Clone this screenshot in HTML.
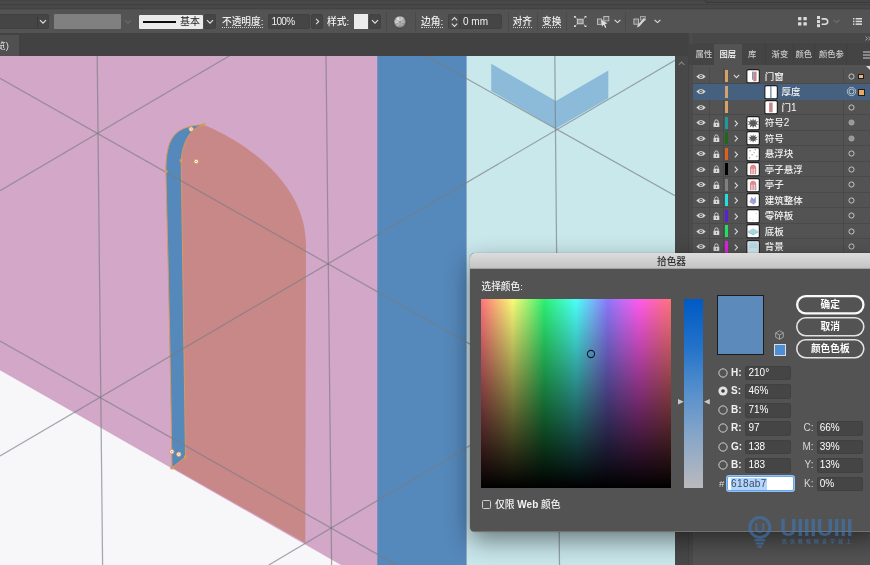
<!DOCTYPE html>
<html lang="zh"><head><meta charset="utf-8"><title>拾色器</title>
<style>
*{box-sizing:border-box;margin:0;padding:0}
html,body{width:870px;height:565px;overflow:hidden;background:#535353}
body{position:relative;font-family:"Liberation Sans","Noto Sans CJK SC",sans-serif;font-size:10px;color:#e6e6e6;-webkit-font-smoothing:antialiased}
.abs{position:absolute}
#appbar{left:0;top:0;width:870px;height:9.5px;background:linear-gradient(#3e3e3e 0,#484848 1px,#484848 3.6px,#3c3c3c 4.2px,#474747 5.2px,#474747 8.2px,#3d3d3d 8.9px,#4d4d4d 9.5px)}
#toolbar{left:0;top:9.5px;width:870px;height:24px;background:#535353}
#tabbar{left:0;top:33px;width:870px;height:23px;background:#424242}
.fld{position:absolute;background:#454545;border:1px solid #414141;border-radius:2px;height:15px;top:14px;color:#f0f0f0;font-size:10px;line-height:13px;padding-left:3px;white-space:nowrap}
.lbl{position:absolute;top:14px;height:15px;line-height:15px;font-size:9.7px;font-weight:500;color:#f0f0f0;white-space:nowrap}
.sep{position:absolute;top:12px;width:1px;height:19px;background:#4a4a4a}
svg{position:absolute;overflow:visible}
</style></head><body><div id="root" style="position:absolute;left:0;top:0;width:870px;height:565px;will-change:transform">
<div class="abs" id="appbar"></div>
<div class="abs" id="toolbar"></div>
<div class="abs" id="tabbar"></div>
<!--TOOLBAR-->
<div class="abs" id="tb" style="left:0;top:0;width:870px;height:56px">
  <!-- app bar search -->
  <div class="abs" style="left:705px;top:-12px;width:170px;height:15px;background:#454545;border:1px solid #3a3a3a;border-radius:2px;font-size:9px;color:#aaa;line-height:12px;padding-left:12px;overflow:hidden">搜索 Adobe Stock</div>
  <!-- doc tab -->
  <div class="abs" style="left:0;top:34.5px;width:19px;height:21.5px;background:#505050;font-size:9.5px;line-height:22px;color:#ddd;overflow:hidden;white-space:nowrap"><span style="position:absolute;right:10px">预览)</span></div>
  <!-- dropdown 1 -->
  <div class="fld" style="left:-10px;width:59px"></div>
  <div class="abs" style="left:37px;top:15px;width:1px;height:13px;background:#3a3a3a"></div>
  <svg style="left:39px;top:19px" width="8" height="6" viewBox="0 0 8 6"><path d="M1,1.2 L4,4.2 L7,1.2" fill="none" stroke="#e0e0e0" stroke-width="1.2"/></svg>
  <!-- gray box -->
  <div class="abs" style="left:54px;top:14px;width:67px;height:15px;background:#808080;border-radius:1px"></div>
  <svg style="left:124px;top:19px" width="8" height="6" viewBox="0 0 8 6"><path d="M1,1.2 L4,4.2 L7,1.2" fill="none" stroke="#6a6a6a" stroke-width="1.2"/></svg>
  <!-- stroke style -->
  <div class="abs" style="left:139px;top:15px;width:64px;height:14px;background:#ebebeb;border-radius:1px"></div>
  <div class="abs" style="left:143px;top:20.6px;width:33px;height:2.6px;background:#0c0c0c"></div>
  <div class="abs" style="left:180px;top:15px;height:14px;line-height:14px;font-size:10px;color:#222;white-space:nowrap">基本</div>
  <div class="fld" style="left:204px;width:12px;padding:0"></div>
  <svg style="left:206px;top:19px" width="8" height="6" viewBox="0 0 8 6"><path d="M1,1.2 L4,4.2 L7,1.2" fill="none" stroke="#e0e0e0" stroke-width="1.2"/></svg>
  <!-- opacity -->
  <div class="lbl" id="l-op" style="left:222px;border-bottom:1px dotted #cfcfcf;height:14px;line-height:15px">不透明度<span style="font-weight:400">:</span></div>
  <div class="fld" id="f-op" style="left:268px;width:42px;letter-spacing:-.7px;padding-left:2.6px">100%</div>
  <div class="fld" style="left:311px;width:12px;padding:0"></div>
  <svg style="left:314.5px;top:18px" width="5" height="7" viewBox="0 0 5 7"><path d="M1.1,.8 L3.7,3.5 L1.1,6.2" fill="none" stroke="#dcdcdc" stroke-width="1.1"/></svg>
  <!-- style -->
  <div class="lbl" id="l-st" style="left:327px">样式<span style="font-weight:400">:</span></div>
  <div class="abs" style="left:353.6px;top:14px;width:14.8px;height:15px;background:#ececec"></div>
  <div class="fld" style="left:369px;width:12px;padding:0"></div>
  <svg style="left:371px;top:19px" width="8" height="6" viewBox="0 0 8 6"><path d="M1,1.2 L4,4.2 L7,1.2" fill="none" stroke="#e0e0e0" stroke-width="1.2"/></svg>
  <!-- recolor sphere -->
  <svg style="left:393px;top:15px" width="14" height="14" viewBox="0 0 14 14">
    <defs><radialGradient id="sph" cx=".4" cy=".35" r=".7"><stop offset="0" stop-color="#f2f2f2"/><stop offset=".6" stop-color="#b0b0b0"/><stop offset="1" stop-color="#6a6a6a"/></radialGradient></defs>
    <circle cx="7" cy="7" r="6.2" fill="url(#sph)" stroke="#3e3e3e" stroke-width=".8"/>
    <path d="M7,7 L7,1 M7,7 L12,4.2 M7,7 L12,10 M7,7 L7,13 M7,7 L2,10 M7,7 L2,4.2" stroke="#7a7a7a" stroke-width=".6"/>
  </svg>
  <div class="sep" style="left:386px"></div><div class="sep" style="left:415px"></div>
  <!-- corner -->
  <div class="lbl" id="l-co" style="left:421px;border-bottom:1px dotted #cfcfcf;height:14px;line-height:15px">边角<span style="font-weight:400">:</span></div>
  <div class="fld" id="f-co" style="left:448px;width:54px;padding-left:14px">0 mm</div>
  <div class="abs" style="left:449px;top:15px;width:11px;height:13px;background:#494949;border-right:1px solid #404040"></div><svg style="left:450px;top:16px" width="9" height="12" viewBox="0 0 9 12"><path d="M1.8,4.3 L4.5,1.6 L7.2,4.3 M1.8,7.7 L4.5,10.4 L7.2,7.7" fill="none" stroke="#dcdcdc" stroke-width="1.1"/></svg>
  <div class="sep" style="left:508px"></div>
  <div class="lbl" id="l-al" style="left:512.5px;border-bottom:1px dotted #cfcfcf;height:14px;line-height:15px">对齐</div>
  <div class="sep" style="left:537px"></div>
  <div class="lbl" id="l-tr" style="left:542px;border-bottom:1px dotted #cfcfcf;height:14px;line-height:15px">变换</div>
  <div class="sep" style="left:566px"></div>
  <!-- isolate icon -->
  <svg style="left:574px;top:16px" width="12.4" height="11" viewBox="0 0 12.4 11"><rect x="3.3" y="3.2" width="5.8" height="4.6" fill="#8e8e8e" stroke="#d4d4d4" stroke-width=".9"/><path d="M.8,.8 L2.5,2.3 M11.6,.8 L9.9,2.3 M.8,10.2 L2.5,8.7 M11.6,10.2 L9.9,8.7" stroke="#dcdcdc" stroke-width=".9"/><g fill="#ececec"><path d="M0,0 H2.3 L0,2.1 Z"/><path d="M12.4,0 H10.1 L12.4,2.1 Z"/><path d="M0,11 H2.3 L0,8.9 Z"/><path d="M12.4,11 H10.1 L12.4,8.9 Z"/></g></svg>
  <!-- select similar icons -->
  <svg style="left:597px;top:15.5px" width="13" height="13" viewBox="0 0 13 13"><rect x=".5" y="3" width="4.2" height="5.4" fill="#6e6e6e" stroke="#c4c4c4" stroke-width=".9"/><rect x="6.8" y=".5" width="5" height="4.4" fill="#676767" stroke="#c4c4c4" stroke-width=".9"/><path d="M4.4,3.8 L10.6,7.6 L7.9,8.1 L9.4,11.4 L8.2,12 L6.8,8.8 L4.9,10.6 Z" fill="#dedede"/></svg>
  <svg style="left:613.5px;top:19px" width="7" height="5" viewBox="0 0 7 5"><path d="M.6,.8 L3.5,3.6 L6.4,.8" fill="none" stroke="#e0e0e0" stroke-width="1.1"/></svg>
  <div class="sep" style="left:625px"></div>
  <svg style="left:633px;top:15.5px" width="13" height="13" viewBox="0 0 13 13"><rect x=".9" y="3" width="4.6" height="5.2" fill="#6e6e6e" stroke="#c4c4c4" stroke-width=".9"/><rect x="7.6" y=".5" width="4.6" height="3.6" fill="#676767" stroke="#b5b5b5" stroke-width=".8"/><path d="M11,2 L12.5,3.4 L6.6,10.2 L3.8,11.6 L4.9,8.7 Z" fill="#d6d6d6"/></svg>
  <svg style="left:653.5px;top:19px" width="7" height="5" viewBox="0 0 7 5"><path d="M.6,.8 L3.5,3.6 L6.4,.8" fill="none" stroke="#e0e0e0" stroke-width="1.1"/></svg>
  <!-- right icons -->
  <svg style="left:798.4px;top:17px" width="9" height="8.6" viewBox="0 0 9 8.6"><g fill="#dcdcdc"><rect x="0" y="0" width="3.4" height="3.2" rx=".5"/><rect x="5.4" y="0" width="3.4" height="3.2" rx=".5"/><rect x="0" y="5.2" width="3.4" height="3.2" rx=".5"/><rect x="5.4" y="5.2" width="3.4" height="3.2" rx=".5"/></g></svg>
  <svg style="left:817px;top:16px" width="12" height="11.4" viewBox="0 0 12 11.4"><g fill="#dcdcdc"><rect x="0" y="0" width="3" height="3"/><rect x="0" y="4.1" width="3" height="3"/><rect x="0" y="8.2" width="3" height="3"/></g><path d="M4.6,2.9 H8 A2.7,2.7 0 0 1 8,8.3 H4.6" fill="none" stroke="#dcdcdc" stroke-width="1.6"/></svg>
  <svg style="left:833px;top:19px" width="7" height="5" viewBox="0 0 7 5"><path d="M.6,.8 L3.5,3.6 L6.4,.8" fill="none" stroke="#707070" stroke-width="1.1"/></svg>
  <svg style="left:853.4px;top:18.4px" width="9" height="7" viewBox="0 0 9 7"><g fill="#dcdcdc"><rect x="0" y="0" width="1.4" height="1.5"/><rect x="0" y="2.7" width="1.4" height="1.5"/><rect x="0" y="5.4" width="1.4" height="1.5"/><rect x="2.6" y="0" width="6.4" height="1.5"/><rect x="2.6" y="2.7" width="6.4" height="1.5"/><rect x="2.6" y="5.4" width="6.4" height="1.5"/></g></svg>
</div>
<!--/TOOLBAR-->
<!--CANVAS-->
<div class="abs" id="canvas" style="left:0;top:56px;width:675px;height:509px;overflow:hidden;background:#d3a7c8">
<svg width="675" height="509" viewBox="0 56 675 509" style="left:0;top:0">
  <defs>
    <linearGradient id="dsh" x1="0" x2="1"><stop offset="0" stop-color="#000" stop-opacity="0"/><stop offset="1" stop-color="#000" stop-opacity=".13"/></linearGradient>
    <linearGradient id="dsv" x1="0" y1="0" x2="0" y2="1"><stop offset="0" stop-color="#000" stop-opacity=".22"/><stop offset="1" stop-color="#000" stop-opacity="0"/></linearGradient>
  </defs>
  <!-- wall -->
  <rect x="0" y="56" width="377.3" height="509" fill="#d3a7c8"/>
  <!-- floor -->
  <polygon points="0,370.2 341,565 0,565" fill="#f7f7f9"/>
  <!-- blue strip -->
  <rect x="377.3" y="56" width="89.4" height="509" fill="#5588bb"/>
  <!-- cyan -->
  <rect x="466.7" y="56" width="210" height="509" fill="#c9e8ec"/>
  <!-- chevron -->
  <polygon points="491.2,63.8 555.9,101 608.3,70.4 608.3,98.3 555.9,128.6 491.2,90.9" fill="#8bbbd9"/>
  <!-- door -->
  <path d="M172,467.6 C170,330 167,220 165.9,171.4 C166,138 174,126 203.9,124.7 C258,148 306,190 306,245 L305.3,543 Z" fill="#c98888"/>
  <!-- thickness -->
  <path id="thick" d="M172,467.6 C170,330 167,220 165.9,171.4 C166,138 174,126 203.9,124.7 C192,127 182.5,140 181.2,160.7 L185.5,457 Z" fill="#5588bb" stroke="#d69a5e" stroke-width="1"/>
  <!-- grid -->
  <g stroke="#787c82" stroke-opacity=".66" stroke-width="1.25" fill="none">
    <line x1="97.2" y1="56" x2="102.6" y2="565"/>
    <line x1="326" y1="56" x2="331.6" y2="565"/>
    <line x1="554.8" y1="56" x2="559.5" y2="565"/>
    <!-- descending -->
    <line x1="0" y1="78.4" x2="675" y2="460"/>
    <line x1="0" y1="341" x2="400" y2="567"/>
    <line x1="425.8" y1="55.6" x2="675" y2="195.8"/>
    <!-- ascending -->
    <line x1="0" y1="190.8" x2="230" y2="55.5"/>
    <line x1="0" y1="456" x2="675" y2="60.4"/>
    <line x1="268.8" y1="565" x2="675" y2="324"/>
  </g>
  <!-- anchors -->
  <g fill="#d69a5e">
    <rect x="202.4" y="123.2" width="3" height="3"/>
    <rect x="179.7" y="159.2" width="3" height="3"/>
    <rect x="164.4" y="169.9" width="3" height="3"/>
    <rect x="170.3" y="466.3" width="3" height="3"/>
    <rect x="184" y="455.5" width="3" height="3"/>
  </g>
  <g fill="#fff" stroke="#d69a5e" stroke-width="1">
    <circle cx="191.1" cy="129.1" r="2.2"/><circle cx="196.2" cy="161.5" r="2.2"/>
    <circle cx="171.8" cy="451.7" r="2.2"/><circle cx="178.8" cy="454.3" r="2.2"/>
  </g>
  <g fill="#d69a5e"><circle cx="191.1" cy="129.1" r=".8"/><circle cx="196.2" cy="161.5" r=".8"/><circle cx="171.8" cy="451.7" r=".8"/><circle cx="178.8" cy="454.3" r=".8"/></g>
  <!-- dialog shadow -->
</svg>
</div>
<div class="abs" style="left:675px;top:55.5px;width:13px;height:510px;background:#484848"></div>
<svg class="abs" style="left:678px;top:60.5px" width="7" height="5" viewBox="0 0 7 5"><path d="M.7,3.9 L3.5,1.1 L6.3,3.9" fill="none" stroke="#858585" stroke-width="1.1"/></svg>
<!--/CANVAS-->
<!--PANEL-->
<div class="abs" id="panel" style="left:688px;top:33px;width:182px;height:532px;background:#454545">
<div class="abs" style="left:0;top:0;width:182px;height:10px;background:#484848"></div>
<div class="abs" style="left:0;top:0;width:5px;height:532px;background:#4b4b4b"></div><div class="abs" style="left:0;top:0;width:1px;height:532px;background:#434343"></div>
<svg style="left:176.5px;top:3px" width="6" height="5" viewBox="0 0 6 5"><path d="M.6,.6 L2.4,2.5 L.6,4.4 M3.4,.6 L5.2,2.5 L3.4,4.4" fill="none" stroke="#b0b0b0" stroke-width=".9"/></svg>
<div class="abs" style="left:1px;top:10.5px;width:181px;height:21px;background:#444"></div>
<div class="abs" style="left:26px;top:10.5px;width:28px;height:22px;background:#535353"></div>
<div class="abs" style="left:76.5px;top:10px;width:1px;height:22px;background:#3e3e3e"></div>
<div class="abs" style="left:105px;top:10px;width:1px;height:22px;background:#3e3e3e"></div>
<div class="abs" style="left:125.5px;top:10px;width:1px;height:22px;background:#3e3e3e"></div>
<div class="abs" style="left:158px;top:10px;width:1px;height:22px;background:#3e3e3e"></div>
<div class="abs tab" style="left:7.6px;top:10px;height:22px;line-height:22px;font-size:8.3px;font-weight:500;color:#c8c8c8;white-space:nowrap">属性</div>
<div class="abs tab" style="left:31.5px;top:10px;height:22px;line-height:22px;font-size:8.3px;font-weight:500;color:#ffffff;white-space:nowrap">图层</div>
<div class="abs tab" style="left:60px;top:10px;height:22px;line-height:22px;font-size:8.3px;font-weight:500;color:#c8c8c8;white-space:nowrap">库</div>
<div class="abs tab" style="left:83.6px;top:10px;height:22px;line-height:22px;font-size:8.3px;font-weight:500;color:#c8c8c8;white-space:nowrap">渐变</div>
<div class="abs tab" style="left:107.5px;top:10px;height:22px;line-height:22px;font-size:8.3px;font-weight:500;color:#c8c8c8;white-space:nowrap">颜色</div>
<div class="abs tab" style="left:131px;top:10px;height:22px;line-height:22px;font-size:8.3px;font-weight:500;color:#c8c8c8;white-space:nowrap">颜色参</div>
<svg style="left:175px;top:17.5px" width="9" height="8" viewBox="0 0 9 8"><path d="M0,1 H9 M0,4 H9 M0,7 H9" stroke="#cfcfcf" stroke-width="1"/></svg>
<div class="abs" style="left:5px;top:32px;width:177px;height:500px;background:#535353"></div>
<div class="abs" style="left:21px;top:35px;width:1px;height:190px;background:#4a4a4a"></div>
<div class="abs" style="left:35px;top:35px;width:1px;height:190px;background:#4a4a4a"></div>
<div class="abs" style="left:154.6px;top:35px;width:1px;height:190px;background:#4a4a4a"></div>
<div class="abs row" style="left:5px;top:35.70px;width:177px;height:15.5px;background:transparent;border-bottom:1px solid #4a4a4a">
<svg style="left:2.6px;top:4px" width="10" height="7" viewBox="0 0 10 7"><path d="M.3,3.5 Q5,-1.6 9.7,3.5 Q5,8.6 .3,3.5 Z" fill="#d8d8d8"/><circle cx="5" cy="3.5" r="1.7" fill="#535353"/><circle cx="5" cy="3.5" r=".8" fill="#d8d8d8"/></svg>
<div class="abs" style="left:32.3px;top:1.4px;width:2.6px;height:12.4px;background:#d6a26c"></div>
<svg style="left:40px;top:5px" width="7" height="5" viewBox="0 0 7 5"><path d="M.8,.8 L3.5,3.6 L6.2,.8" fill="none" stroke="#d8d8d8" stroke-width="1.1"/></svg>
<svg style="left:53.3px;top:.5px" width="14.2" height="14.4" viewBox="-.3 -.1 13.6 14.2" preserveAspectRatio="none"><rect x=".5" y=".5" width="12" height="13" rx="1.6" fill="#fff" stroke="#1e1e1e" stroke-width="1.1"/><rect x="5.6" y="2.5" width="1" height="8" fill="#5588bb"/><rect x="6.6" y="2.5" width="3.2" height="9.5" fill="#c98888"/></svg>
<div class="abs nm" style="left:71.7px;top:0;height:15px;line-height:15px;font-size:9.5px;font-weight:500;color:#f4f4f4;white-space:nowrap">门窗</div>
<svg style="left:154.5px;top:4.2px" width="7" height="7" viewBox="0 0 7 7"><circle cx="3.5" cy="3.5" r="2.6" fill="none" stroke="#c6c6c6" stroke-width="1"/></svg>
<div class="abs" style="left:165.3px;top:5px;width:5.8px;height:5.6px;background:#eeb27a;border:1px solid #1e1e1e"></div>
</div>
<div class="abs row" style="left:5px;top:51.20px;width:177px;height:15.5px;background:#46607f;border-bottom:1px solid #46607f">
<svg style="left:2.6px;top:4px" width="10" height="7" viewBox="0 0 10 7"><path d="M.3,3.5 Q5,-1.6 9.7,3.5 Q5,8.6 .3,3.5 Z" fill="#d8d8d8"/><circle cx="5" cy="3.5" r="1.7" fill="#535353"/><circle cx="5" cy="3.5" r=".8" fill="#d8d8d8"/></svg>
<div class="abs" style="left:32.3px;top:1.4px;width:2.6px;height:12.4px;background:#d6a26c"></div>
<svg style="left:71.2px;top:.5px" width="14.2" height="14.4" viewBox="-.3 -.1 13.6 14.2" preserveAspectRatio="none"><rect x=".5" y=".5" width="12" height="13" rx="1.6" fill="#fff" stroke="#1e1e1e" stroke-width="1.1"/><rect x="5.8" y="1" width="1" height="12" fill="#4a6a8c"/></svg>
<div class="abs nm" style="left:88.5px;top:0;height:15px;line-height:15px;font-size:9.5px;font-weight:500;color:#f4f4f4;white-space:nowrap">厚度</div>
<svg style="left:152.5px;top:2.2px" width="11" height="11" viewBox="0 0 11 11"><circle cx="5.5" cy="5.5" r="4.2" fill="none" stroke="#b4c2d2" stroke-width=".9"/><circle cx="5.5" cy="5.5" r="2.5" fill="none" stroke="#d0d8e0" stroke-width=".9"/></svg>
<div class="abs" style="left:164.8px;top:4.4px;width:7.4px;height:7px;background:#eaa862;border:1px solid #1e1e1e"></div>
</div>
<div class="abs row" style="left:5px;top:66.70px;width:177px;height:15.5px;background:transparent;border-bottom:1px solid #4a4a4a">
<svg style="left:2.6px;top:4px" width="10" height="7" viewBox="0 0 10 7"><path d="M.3,3.5 Q5,-1.6 9.7,3.5 Q5,8.6 .3,3.5 Z" fill="#d8d8d8"/><circle cx="5" cy="3.5" r="1.7" fill="#535353"/><circle cx="5" cy="3.5" r=".8" fill="#d8d8d8"/></svg>
<div class="abs" style="left:32.3px;top:1.4px;width:2.6px;height:12.4px;background:#d6a26c"></div>
<svg style="left:71.2px;top:.5px" width="14.2" height="14.4" viewBox="-.3 -.1 13.6 14.2" preserveAspectRatio="none"><rect x=".5" y=".5" width="12" height="13" rx="1.6" fill="#fff" stroke="#1e1e1e" stroke-width="1.1"/><rect x="4.6" y="2.5" width="3.4" height="9.5" fill="#c98888"/></svg>
<div class="abs nm" style="left:88.5px;top:0;height:15px;line-height:15px;font-size:9.5px;font-weight:500;color:#f4f4f4;white-space:nowrap">门<span style="font-weight:400;font-size:10px">1</span></div>
<svg style="left:154.5px;top:4.2px" width="7" height="7" viewBox="0 0 7 7"><circle cx="3.5" cy="3.5" r="2.6" fill="none" stroke="#c6c6c6" stroke-width="1"/></svg>
</div>
<div class="abs row" style="left:5px;top:82.20px;width:177px;height:15.5px;background:transparent;border-bottom:1px solid #4a4a4a">
<svg style="left:2.6px;top:4px" width="10" height="7" viewBox="0 0 10 7"><path d="M.3,3.5 Q5,-1.6 9.7,3.5 Q5,8.6 .3,3.5 Z" fill="#d8d8d8"/><circle cx="5" cy="3.5" r="1.7" fill="#535353"/><circle cx="5" cy="3.5" r=".8" fill="#d8d8d8"/></svg>
<svg style="left:20px;top:3.6px" width="6.8" height="8.6" viewBox="0 0 8 10"><path d="M2,4.5 V3 A2,2 0 0 1 6,3 V4.5" fill="none" stroke="#d8d8d8" stroke-width="1.1"/><rect x=".6" y="4.3" width="6.8" height="5.2" rx=".8" fill="#d8d8d8"/><rect x="3.5" y="5.8" width="1" height="2" fill="#535353"/></svg>
<div class="abs" style="left:32.3px;top:1.4px;width:2.6px;height:12.4px;background:#1f9a9a"></div>
<svg style="left:41.2px;top:4.4px" width="4.4" height="7" viewBox="0 0 4.4 7"><path d="M.8,.7 L3.5,3.5 L.8,6.3" fill="none" stroke="#d8d8d8" stroke-width="1.1"/></svg>
<svg style="left:53.3px;top:.5px" width="14.2" height="14.4" viewBox="-.3 -.1 13.6 14.2" preserveAspectRatio="none"><rect x=".5" y=".5" width="12" height="13" rx="1.6" fill="#fff" stroke="#1e1e1e" stroke-width="1.1"/><path d="M6.5,2 L7.3,4.6 L9.6,2.8 L8.8,5.4 L12,5 L9.6,6.8 L12,8.6 L8.9,8.4 L9.8,11.2 L7.4,9.4 L6.5,12 L5.6,9.4 L3.2,11.2 L4.1,8.4 L1,8.6 L3.4,6.8 L1,5 L4.2,5.4 L3.4,2.8 L5.7,4.6 Z" fill="#5a5a5a"/></svg>
<div class="abs nm" style="left:71.7px;top:0;height:15px;line-height:15px;font-size:9.5px;font-weight:500;color:#f4f4f4;white-space:nowrap">符号<span style="font-weight:400;font-size:10px">2</span></div>
<svg style="left:154.5px;top:4.2px" width="7" height="7" viewBox="0 0 7 7"><circle cx="3.5" cy="3.5" r="2.6" fill="#979797" stroke="#b0b0b0" stroke-width=".7"/></svg>
</div>
<div class="abs row" style="left:5px;top:97.70px;width:177px;height:15.5px;background:transparent;border-bottom:1px solid #4a4a4a">
<svg style="left:2.6px;top:4px" width="10" height="7" viewBox="0 0 10 7"><path d="M.3,3.5 Q5,-1.6 9.7,3.5 Q5,8.6 .3,3.5 Z" fill="#d8d8d8"/><circle cx="5" cy="3.5" r="1.7" fill="#535353"/><circle cx="5" cy="3.5" r=".8" fill="#d8d8d8"/></svg>
<svg style="left:20px;top:3.6px" width="6.8" height="8.6" viewBox="0 0 8 10"><path d="M2,4.5 V3 A2,2 0 0 1 6,3 V4.5" fill="none" stroke="#d8d8d8" stroke-width="1.1"/><rect x=".6" y="4.3" width="6.8" height="5.2" rx=".8" fill="#d8d8d8"/><rect x="3.5" y="5.8" width="1" height="2" fill="#535353"/></svg>
<div class="abs" style="left:32.3px;top:1.4px;width:2.6px;height:12.4px;background:#1a6a1a"></div>
<svg style="left:41.2px;top:4.4px" width="4.4" height="7" viewBox="0 0 4.4 7"><path d="M.8,.7 L3.5,3.5 L.8,6.3" fill="none" stroke="#d8d8d8" stroke-width="1.1"/></svg>
<svg style="left:53.3px;top:.5px" width="14.2" height="14.4" viewBox="-.3 -.1 13.6 14.2" preserveAspectRatio="none"><rect x=".5" y=".5" width="12" height="13" rx="1.6" fill="#fff" stroke="#1e1e1e" stroke-width="1.1"/><path d="M6.5,3 L7.2,5 L9.2,3.6 L8.5,5.8 L11.2,5.6 L9.2,7 L11.2,8.6 L8.6,8.3 L9.2,10.6 L7.3,9.2 L6.5,11.4 L5.7,9.2 L3.8,10.6 L4.4,8.3 L1.8,8.6 L3.8,7 L1.8,5.6 L4.5,5.8 L3.8,3.6 L5.8,5 Z" fill="#5a5a5a"/></svg>
<div class="abs nm" style="left:71.7px;top:0;height:15px;line-height:15px;font-size:9.5px;font-weight:500;color:#f4f4f4;white-space:nowrap">符号</div>
<svg style="left:154.5px;top:4.2px" width="7" height="7" viewBox="0 0 7 7"><circle cx="3.5" cy="3.5" r="2.6" fill="#979797" stroke="#b0b0b0" stroke-width=".7"/></svg>
</div>
<div class="abs row" style="left:5px;top:113.20px;width:177px;height:15.5px;background:transparent;border-bottom:1px solid #4a4a4a">
<svg style="left:2.6px;top:4px" width="10" height="7" viewBox="0 0 10 7"><path d="M.3,3.5 Q5,-1.6 9.7,3.5 Q5,8.6 .3,3.5 Z" fill="#d8d8d8"/><circle cx="5" cy="3.5" r="1.7" fill="#535353"/><circle cx="5" cy="3.5" r=".8" fill="#d8d8d8"/></svg>
<svg style="left:20px;top:3.6px" width="6.8" height="8.6" viewBox="0 0 8 10"><path d="M2,4.5 V3 A2,2 0 0 1 6,3 V4.5" fill="none" stroke="#d8d8d8" stroke-width="1.1"/><rect x=".6" y="4.3" width="6.8" height="5.2" rx=".8" fill="#d8d8d8"/><rect x="3.5" y="5.8" width="1" height="2" fill="#535353"/></svg>
<div class="abs" style="left:32.3px;top:1.4px;width:2.6px;height:12.4px;background:#e0601e"></div>
<svg style="left:41.2px;top:4.4px" width="4.4" height="7" viewBox="0 0 4.4 7"><path d="M.8,.7 L3.5,3.5 L.8,6.3" fill="none" stroke="#d8d8d8" stroke-width="1.1"/></svg>
<svg style="left:53.3px;top:.5px" width="14.2" height="14.4" viewBox="-.3 -.1 13.6 14.2" preserveAspectRatio="none"><rect x=".5" y=".5" width="12" height="13" rx="1.6" fill="#fff" stroke="#1e1e1e" stroke-width="1.1"/><g fill="#999"><rect x="3" y="3" width="1.2" height="1.2"/><rect x="8" y="2" width="1.2" height="1.2"/><rect x="5" y="7" width="1.2" height="1.2"/><rect x="9.5" y="8.5" width="1.2" height="1.2"/><rect x="2.5" y="10" width="1.2" height="1.2"/><rect x="7" y="5" width="1" height="1"/></g></svg>
<div class="abs nm" style="left:71.7px;top:0;height:15px;line-height:15px;font-size:9.5px;font-weight:500;color:#f4f4f4;white-space:nowrap">悬浮块</div>
<svg style="left:154.5px;top:4.2px" width="7" height="7" viewBox="0 0 7 7"><circle cx="3.5" cy="3.5" r="2.6" fill="none" stroke="#c6c6c6" stroke-width="1"/></svg>
</div>
<div class="abs row" style="left:5px;top:128.70px;width:177px;height:15.5px;background:transparent;border-bottom:1px solid #4a4a4a">
<svg style="left:2.6px;top:4px" width="10" height="7" viewBox="0 0 10 7"><path d="M.3,3.5 Q5,-1.6 9.7,3.5 Q5,8.6 .3,3.5 Z" fill="#d8d8d8"/><circle cx="5" cy="3.5" r="1.7" fill="#535353"/><circle cx="5" cy="3.5" r=".8" fill="#d8d8d8"/></svg>
<svg style="left:20px;top:3.6px" width="6.8" height="8.6" viewBox="0 0 8 10"><path d="M2,4.5 V3 A2,2 0 0 1 6,3 V4.5" fill="none" stroke="#d8d8d8" stroke-width="1.1"/><rect x=".6" y="4.3" width="6.8" height="5.2" rx=".8" fill="#d8d8d8"/><rect x="3.5" y="5.8" width="1" height="2" fill="#535353"/></svg>
<div class="abs" style="left:32.3px;top:1.4px;width:2.6px;height:12.4px;background:#000000"></div>
<svg style="left:41.2px;top:4.4px" width="4.4" height="7" viewBox="0 0 4.4 7"><path d="M.8,.7 L3.5,3.5 L.8,6.3" fill="none" stroke="#d8d8d8" stroke-width="1.1"/></svg>
<svg style="left:53.3px;top:.5px" width="14.2" height="14.4" viewBox="-.3 -.1 13.6 14.2" preserveAspectRatio="none"><rect x=".5" y=".5" width="12" height="13" rx="1.6" fill="#fff" stroke="#1e1e1e" stroke-width="1.1"/><path d="M3.5,12 V6 Q3.5,2.5 6.5,2.5 Q9.5,2.5 9.5,6 V12 H8 V6.5 H7.2 V12 H5.8 V6.5 H5 V12 Z" fill="#e08a8a"/></svg>
<div class="abs nm" style="left:71.7px;top:0;height:15px;line-height:15px;font-size:9.5px;font-weight:500;color:#f4f4f4;white-space:nowrap">亭子悬浮</div>
<svg style="left:154.5px;top:4.2px" width="7" height="7" viewBox="0 0 7 7"><circle cx="3.5" cy="3.5" r="2.6" fill="none" stroke="#c6c6c6" stroke-width="1"/></svg>
</div>
<div class="abs row" style="left:5px;top:144.20px;width:177px;height:15.5px;background:transparent;border-bottom:1px solid #4a4a4a">
<svg style="left:2.6px;top:4px" width="10" height="7" viewBox="0 0 10 7"><path d="M.3,3.5 Q5,-1.6 9.7,3.5 Q5,8.6 .3,3.5 Z" fill="#d8d8d8"/><circle cx="5" cy="3.5" r="1.7" fill="#535353"/><circle cx="5" cy="3.5" r=".8" fill="#d8d8d8"/></svg>
<svg style="left:20px;top:3.6px" width="6.8" height="8.6" viewBox="0 0 8 10"><path d="M2,4.5 V3 A2,2 0 0 1 6,3 V4.5" fill="none" stroke="#d8d8d8" stroke-width="1.1"/><rect x=".6" y="4.3" width="6.8" height="5.2" rx=".8" fill="#d8d8d8"/><rect x="3.5" y="5.8" width="1" height="2" fill="#535353"/></svg>
<div class="abs" style="left:32.3px;top:1.4px;width:2.6px;height:12.4px;background:#808080"></div>
<svg style="left:41.2px;top:4.4px" width="4.4" height="7" viewBox="0 0 4.4 7"><path d="M.8,.7 L3.5,3.5 L.8,6.3" fill="none" stroke="#d8d8d8" stroke-width="1.1"/></svg>
<svg style="left:53.3px;top:.5px" width="14.2" height="14.4" viewBox="-.3 -.1 13.6 14.2" preserveAspectRatio="none"><rect x=".5" y=".5" width="12" height="13" rx="1.6" fill="#fff" stroke="#1e1e1e" stroke-width="1.1"/><path d="M3.5,12 V6 Q3.5,2.5 6.5,2.5 Q9.5,2.5 9.5,6 V12 H8 V6.5 H7.2 V12 H5.8 V6.5 H5 V12 Z" fill="#e08a8a"/><rect x="8" y="8" width="1.5" height="4" fill="#9bb8d8"/></svg>
<div class="abs nm" style="left:71.7px;top:0;height:15px;line-height:15px;font-size:9.5px;font-weight:500;color:#f4f4f4;white-space:nowrap">亭子</div>
<svg style="left:154.5px;top:4.2px" width="7" height="7" viewBox="0 0 7 7"><circle cx="3.5" cy="3.5" r="2.6" fill="none" stroke="#c6c6c6" stroke-width="1"/></svg>
</div>
<div class="abs row" style="left:5px;top:159.70px;width:177px;height:15.5px;background:transparent;border-bottom:1px solid #4a4a4a">
<svg style="left:2.6px;top:4px" width="10" height="7" viewBox="0 0 10 7"><path d="M.3,3.5 Q5,-1.6 9.7,3.5 Q5,8.6 .3,3.5 Z" fill="#d8d8d8"/><circle cx="5" cy="3.5" r="1.7" fill="#535353"/><circle cx="5" cy="3.5" r=".8" fill="#d8d8d8"/></svg>
<svg style="left:20px;top:3.6px" width="6.8" height="8.6" viewBox="0 0 8 10"><path d="M2,4.5 V3 A2,2 0 0 1 6,3 V4.5" fill="none" stroke="#d8d8d8" stroke-width="1.1"/><rect x=".6" y="4.3" width="6.8" height="5.2" rx=".8" fill="#d8d8d8"/><rect x="3.5" y="5.8" width="1" height="2" fill="#535353"/></svg>
<div class="abs" style="left:32.3px;top:1.4px;width:2.6px;height:12.4px;background:#22dede"></div>
<svg style="left:41.2px;top:4.4px" width="4.4" height="7" viewBox="0 0 4.4 7"><path d="M.8,.7 L3.5,3.5 L.8,6.3" fill="none" stroke="#d8d8d8" stroke-width="1.1"/></svg>
<svg style="left:53.3px;top:.5px" width="14.2" height="14.4" viewBox="-.3 -.1 13.6 14.2" preserveAspectRatio="none"><rect x=".5" y=".5" width="12" height="13" rx="1.6" fill="#fff" stroke="#1e1e1e" stroke-width="1.1"/><path d="M3,9 L5,3.5 L7,6 L9,3 L9.5,9 L7,11.5 L5,10 Z" fill="#a9a2d4"/><path d="M5,5 L8,8" stroke="#6fa0d0" stroke-width="1"/></svg>
<div class="abs nm" style="left:71.7px;top:0;height:15px;line-height:15px;font-size:9.5px;font-weight:500;color:#f4f4f4;white-space:nowrap">建筑整体</div>
<svg style="left:154.5px;top:4.2px" width="7" height="7" viewBox="0 0 7 7"><circle cx="3.5" cy="3.5" r="2.6" fill="none" stroke="#c6c6c6" stroke-width="1"/></svg>
</div>
<div class="abs row" style="left:5px;top:175.20px;width:177px;height:15.5px;background:transparent;border-bottom:1px solid #4a4a4a">
<svg style="left:2.6px;top:4px" width="10" height="7" viewBox="0 0 10 7"><path d="M.3,3.5 Q5,-1.6 9.7,3.5 Q5,8.6 .3,3.5 Z" fill="#d8d8d8"/><circle cx="5" cy="3.5" r="1.7" fill="#535353"/><circle cx="5" cy="3.5" r=".8" fill="#d8d8d8"/></svg>
<svg style="left:20px;top:3.6px" width="6.8" height="8.6" viewBox="0 0 8 10"><path d="M2,4.5 V3 A2,2 0 0 1 6,3 V4.5" fill="none" stroke="#d8d8d8" stroke-width="1.1"/><rect x=".6" y="4.3" width="6.8" height="5.2" rx=".8" fill="#d8d8d8"/><rect x="3.5" y="5.8" width="1" height="2" fill="#535353"/></svg>
<div class="abs" style="left:32.3px;top:1.4px;width:2.6px;height:12.4px;background:#5a1ee0"></div>
<svg style="left:41.2px;top:4.4px" width="4.4" height="7" viewBox="0 0 4.4 7"><path d="M.8,.7 L3.5,3.5 L.8,6.3" fill="none" stroke="#d8d8d8" stroke-width="1.1"/></svg>
<svg style="left:53.3px;top:.5px" width="14.2" height="14.4" viewBox="-.3 -.1 13.6 14.2" preserveAspectRatio="none"><rect x=".5" y=".5" width="12" height="13" rx="1.6" fill="#fff" stroke="#1e1e1e" stroke-width="1.1"/><g fill="#cfcfe2"><rect x="3" y="9" width="1" height="1"/><rect x="9" y="4" width="1" height="1"/><rect x="6" y="10.5" width="1" height="1"/></g></svg>
<div class="abs nm" style="left:71.7px;top:0;height:15px;line-height:15px;font-size:9.5px;font-weight:500;color:#f4f4f4;white-space:nowrap">零碎板</div>
<svg style="left:154.5px;top:4.2px" width="7" height="7" viewBox="0 0 7 7"><circle cx="3.5" cy="3.5" r="2.6" fill="none" stroke="#c6c6c6" stroke-width="1"/></svg>
</div>
<div class="abs row" style="left:5px;top:190.70px;width:177px;height:15.5px;background:transparent;border-bottom:1px solid #4a4a4a">
<svg style="left:2.6px;top:4px" width="10" height="7" viewBox="0 0 10 7"><path d="M.3,3.5 Q5,-1.6 9.7,3.5 Q5,8.6 .3,3.5 Z" fill="#d8d8d8"/><circle cx="5" cy="3.5" r="1.7" fill="#535353"/><circle cx="5" cy="3.5" r=".8" fill="#d8d8d8"/></svg>
<svg style="left:20px;top:3.6px" width="6.8" height="8.6" viewBox="0 0 8 10"><path d="M2,4.5 V3 A2,2 0 0 1 6,3 V4.5" fill="none" stroke="#d8d8d8" stroke-width="1.1"/><rect x=".6" y="4.3" width="6.8" height="5.2" rx=".8" fill="#d8d8d8"/><rect x="3.5" y="5.8" width="1" height="2" fill="#535353"/></svg>
<div class="abs" style="left:32.3px;top:1.4px;width:2.6px;height:12.4px;background:#20e060"></div>
<svg style="left:41.2px;top:4.4px" width="4.4" height="7" viewBox="0 0 4.4 7"><path d="M.8,.7 L3.5,3.5 L.8,6.3" fill="none" stroke="#d8d8d8" stroke-width="1.1"/></svg>
<svg style="left:53.3px;top:.5px" width="14.2" height="14.4" viewBox="-.3 -.1 13.6 14.2" preserveAspectRatio="none"><rect x=".5" y=".5" width="12" height="13" rx="1.6" fill="#fff" stroke="#1e1e1e" stroke-width="1.1"/><path d="M1.5,7 L6.5,4 L11.5,7 L6.5,10 Z" fill="#a8d8dc"/><path d="M1.5,7 L6.5,10 L11.5,7 V8 L6.5,11 L1.5,8 Z" fill="#7fbcc4"/></svg>
<div class="abs nm" style="left:71.7px;top:0;height:15px;line-height:15px;font-size:9.5px;font-weight:500;color:#f4f4f4;white-space:nowrap">底板</div>
<svg style="left:154.5px;top:4.2px" width="7" height="7" viewBox="0 0 7 7"><circle cx="3.5" cy="3.5" r="2.6" fill="none" stroke="#c6c6c6" stroke-width="1"/></svg>
</div>
<div class="abs row" style="left:5px;top:206.20px;width:177px;height:15.5px;background:transparent;border-bottom:1px solid #4a4a4a">
<svg style="left:2.6px;top:4px" width="10" height="7" viewBox="0 0 10 7"><path d="M.3,3.5 Q5,-1.6 9.7,3.5 Q5,8.6 .3,3.5 Z" fill="#d8d8d8"/><circle cx="5" cy="3.5" r="1.7" fill="#535353"/><circle cx="5" cy="3.5" r=".8" fill="#d8d8d8"/></svg>
<svg style="left:20px;top:3.6px" width="6.8" height="8.6" viewBox="0 0 8 10"><path d="M2,4.5 V3 A2,2 0 0 1 6,3 V4.5" fill="none" stroke="#d8d8d8" stroke-width="1.1"/><rect x=".6" y="4.3" width="6.8" height="5.2" rx=".8" fill="#d8d8d8"/><rect x="3.5" y="5.8" width="1" height="2" fill="#535353"/></svg>
<div class="abs" style="left:32.3px;top:1.4px;width:2.6px;height:12.4px;background:#e020e0"></div>
<svg style="left:41.2px;top:4.4px" width="4.4" height="7" viewBox="0 0 4.4 7"><path d="M.8,.7 L3.5,3.5 L.8,6.3" fill="none" stroke="#d8d8d8" stroke-width="1.1"/></svg>
<svg style="left:53.3px;top:.5px" width="14.2" height="14.4" viewBox="-.3 -.1 13.6 14.2" preserveAspectRatio="none"><rect x=".5" y=".5" width="12" height="13" rx="1.6" fill="#fff" stroke="#1e1e1e" stroke-width="1.1"/><rect x="2" y="2" width="9" height="10.5" fill="#b9dcea"/><rect x="2" y="8" width="9" height="4.5" fill="#d2e9f0"/></svg>
<div class="abs nm" style="left:71.7px;top:0;height:15px;line-height:15px;font-size:9.5px;font-weight:500;color:#f4f4f4;white-space:nowrap">背景</div>
<svg style="left:154.5px;top:4.2px" width="7" height="7" viewBox="0 0 7 7"><circle cx="3.5" cy="3.5" r="2.6" fill="none" stroke="#c6c6c6" stroke-width="1"/></svg>
</div>
<svg style="left:178px;top:33px" width="4" height="4" viewBox="0 0 4 4"><path d="M0,0 H4 V4 Z" fill="#d8d8d8"/></svg>
</div>
<!--/PANEL-->
<!--DIALOG-->
<div class="abs" id="dlg" style="left:470px;top:252.5px;width:410px;height:279px;background:#535353;border-radius:5px 0 0 5px;box-shadow:0 9px 24px rgba(0,0,0,.46),0 0 1px rgba(0,0,0,.5)">
<div class="abs" style="left:3px;top:278.2px;width:407px;height:1px;background:#737373"></div><div class="abs" id="dtitle" style="left:0;top:0;width:410px;height:16.5px;background:linear-gradient(#dcdcdc,#c4c4c4);border-radius:5px 0 0 0;border-bottom:1px solid #a2a2a2;font-size:9.7px;line-height:16px;color:#2a2a2a;white-space:nowrap"><span id="ttl" style="position:absolute;left:187px;top:1px;font-weight:500">拾色器</span></div>
<div class="abs" id="selc" style="left:11.5px;top:27px;height:14px;line-height:14px;font-size:9.7px;color:#f0f0f0;font-weight:500;white-space:nowrap">选择颜色<span style="font-weight:400">:</span></div>
<div class="abs" id="field" style="left:11px;top:46.5px;width:189.5px;height:189px;background:linear-gradient(to bottom,rgba(0,0,0,0),#000),linear-gradient(to right,#ff737b 0%,#fbb877 8.33%,#fafa78 16.67%,#9af573 25%,#2df073 33.33%,#3cf8b4 41.67%,#4bfffa 50%,#73bcfa 58.33%,#8c78fa 66.67%,#c86af5 75%,#ff5aeb 83.33%,#ff66b0 91.67%,#ff737b 100%)"></div>
<svg style="left:116px;top:96.3px" width="10" height="10" viewBox="0 0 10 10"><circle cx="5" cy="5" r="3.6" fill="none" stroke="#0e1a2a" stroke-width="1.1"/></svg>
<div class="abs" id="slider" style="left:214.4px;top:46.5px;width:19px;height:189px;background:linear-gradient(to bottom,rgb(0,90,198),rgb(10,98,198) 8%,rgb(34,114,201) 25%,rgb(88,145,204) 50%,rgb(140,168,200) 75%,rgb(186,186,188))"></div>
<svg style="left:208px;top:146.3px" width="5.8" height="5.6" viewBox="0 0 5.8 5.6"><path d="M0,0 L5.8,2.8 L0,5.6 Z" fill="#cacaca"/></svg>
<svg style="left:233.8px;top:146.3px" width="5.8" height="5.6" viewBox="0 0 5.8 5.6"><path d="M5.8,0 L0,2.8 L5.8,5.6 Z" fill="#cacaca"/></svg>
<div class="abs" style="left:247px;top:42.5px;width:46.5px;height:59.5px;background:#5c8aba;border:1px solid #1c1c1c"></div>
<svg style="left:305px;top:77.5px" width="9" height="10" viewBox="0 0 9 10"><path d="M4.5,.7 L8.3,2.8 V7.2 L4.5,9.3 L.7,7.2 V2.8 Z M.7,2.8 L4.5,5 L8.3,2.8 M4.5,5 V9.3" fill="none" stroke="#a6a6a6" stroke-width=".95"/></svg>
<div class="abs" style="left:303.6px;top:91.5px;width:12px;height:12px;background:#4c8fd4;border:1px solid #dcdcdc"></div>
<svg style="left:326px;top:42.5px" width="68.6" height="19.5" viewBox="0 0 68.6 19.5"><rect x="1.15" y="1.15" width="66.3" height="17.2" rx="8.6" fill="none" stroke="#fafafa" stroke-width="2.3"/></svg><div class="abs btn" style="left:326px;top:42.5px;width:68.6px;height:19.5px;text-align:center;font-size:9.7px;line-height:20.2px;color:#fff;font-weight:bold;white-space:nowrap">确定</div>
<svg style="left:326px;top:64.5px" width="68.6" height="19.5" viewBox="0 0 68.6 19.5"><rect x="0.8" y="0.8" width="67.0" height="17.9" rx="8.95" fill="none" stroke="#e2e2e2" stroke-width="1.6"/></svg><div class="abs btn" style="left:326px;top:64.5px;width:68.6px;height:19.5px;text-align:center;font-size:9.7px;line-height:20.2px;color:#fff;font-weight:bold;white-space:nowrap">取消</div>
<svg style="left:326px;top:86.5px" width="68.6" height="19.5" viewBox="0 0 68.6 19.5"><rect x="0.8" y="0.8" width="67.0" height="17.9" rx="8.95" fill="none" stroke="#e2e2e2" stroke-width="1.6"/></svg><div class="abs btn" style="left:326px;top:86.5px;width:68.6px;height:19.5px;text-align:center;font-size:9.7px;line-height:20.2px;color:#fff;font-weight:bold;white-space:nowrap">颜色色板</div>
<svg style="left:247.6px;top:115.3px" width="10" height="10" viewBox="0 0 10 10"><circle cx="5" cy="5" r="4.15" fill="#535353" stroke="#d0d0d0" stroke-width="1"/></svg>
<div class="abs rl" style="left:261px;top:113.3px;height:14px;line-height:14px;font-size:10px;color:#f0f0f0;font-weight:bold;white-space:nowrap">H:</div>
<div class="abs df" style="left:274.5px;top:113.3px;width:46.5px;height:14.5px;background:#454545;border:1px solid #404040;border-radius:2px;font-size:10px;line-height:12.5px;color:#fff;padding-left:3px;white-space:nowrap">210°</div>
<svg style="left:247.6px;top:133.9px" width="10" height="10" viewBox="0 0 10 10"><circle cx="5" cy="5" r="4.6" fill="#e2e2e2"/><circle cx="5" cy="5" r="1.8" fill="#3a3a3a"/></svg>
<div class="abs rl" style="left:261px;top:131.9px;height:14px;line-height:14px;font-size:10px;color:#f0f0f0;font-weight:bold;white-space:nowrap">S:</div>
<div class="abs df" style="left:274.5px;top:131.9px;width:46.5px;height:14.5px;background:#454545;border:1px solid #404040;border-radius:2px;font-size:10px;line-height:12.5px;color:#fff;padding-left:3px;white-space:nowrap">46%</div>
<svg style="left:247.6px;top:152.5px" width="10" height="10" viewBox="0 0 10 10"><circle cx="5" cy="5" r="4.15" fill="#535353" stroke="#d0d0d0" stroke-width="1"/></svg>
<div class="abs rl" style="left:261px;top:150.5px;height:14px;line-height:14px;font-size:10px;color:#f0f0f0;font-weight:bold;white-space:nowrap">B:</div>
<div class="abs df" style="left:274.5px;top:150.5px;width:46.5px;height:14.5px;background:#454545;border:1px solid #404040;border-radius:2px;font-size:10px;line-height:12.5px;color:#fff;padding-left:3px;white-space:nowrap">71%</div>
<svg style="left:247.6px;top:170.9px" width="10" height="10" viewBox="0 0 10 10"><circle cx="5" cy="5" r="4.15" fill="#535353" stroke="#d0d0d0" stroke-width="1"/></svg>
<div class="abs rl" style="left:261px;top:168.9px;height:14px;line-height:14px;font-size:10px;color:#f0f0f0;font-weight:bold;white-space:nowrap">R:</div>
<div class="abs df" style="left:274.5px;top:168.9px;width:46.5px;height:14.5px;background:#454545;border:1px solid #404040;border-radius:2px;font-size:10px;line-height:12.5px;color:#fff;padding-left:3px;white-space:nowrap">97</div>
<svg style="left:247.6px;top:189.4px" width="10" height="10" viewBox="0 0 10 10"><circle cx="5" cy="5" r="4.15" fill="#535353" stroke="#d0d0d0" stroke-width="1"/></svg>
<div class="abs rl" style="left:261px;top:187.4px;height:14px;line-height:14px;font-size:10px;color:#f0f0f0;font-weight:bold;white-space:nowrap">G:</div>
<div class="abs df" style="left:274.5px;top:187.4px;width:46.5px;height:14.5px;background:#454545;border:1px solid #404040;border-radius:2px;font-size:10px;line-height:12.5px;color:#fff;padding-left:3px;white-space:nowrap">138</div>
<svg style="left:247.6px;top:207.8px" width="10" height="10" viewBox="0 0 10 10"><circle cx="5" cy="5" r="4.15" fill="#535353" stroke="#d0d0d0" stroke-width="1"/></svg>
<div class="abs rl" style="left:261px;top:205.8px;height:14px;line-height:14px;font-size:10px;color:#f0f0f0;font-weight:bold;white-space:nowrap">B:</div>
<div class="abs df" style="left:274.5px;top:205.8px;width:46.5px;height:14.5px;background:#454545;border:1px solid #404040;border-radius:2px;font-size:10px;line-height:12.5px;color:#fff;padding-left:3px;white-space:nowrap">183</div>
<div class="abs cl" style="left:325px;top:168.9px;width:18.5px;text-align:right;height:14px;line-height:14px;font-size:10px;color:#d8d8d8;white-space:nowrap">C:</div>
<div class="abs df" style="left:346.5px;top:168.9px;width:46.5px;height:14.5px;background:#454545;border:1px solid #404040;border-radius:2px;font-size:10px;line-height:12.5px;color:#fff;padding-left:2.2px;white-space:nowrap">66%</div>
<div class="abs cl" style="left:325px;top:187.4px;width:18.5px;text-align:right;height:14px;line-height:14px;font-size:10px;color:#d8d8d8;white-space:nowrap">M:</div>
<div class="abs df" style="left:346.5px;top:187.4px;width:46.5px;height:14.5px;background:#454545;border:1px solid #404040;border-radius:2px;font-size:10px;line-height:12.5px;color:#fff;padding-left:2.2px;white-space:nowrap">39%</div>
<div class="abs cl" style="left:325px;top:205.8px;width:18.5px;text-align:right;height:14px;line-height:14px;font-size:10px;color:#d8d8d8;white-space:nowrap">Y:</div>
<div class="abs df" style="left:346.5px;top:205.8px;width:46.5px;height:14.5px;background:#454545;border:1px solid #404040;border-radius:2px;font-size:10px;line-height:12.5px;color:#fff;padding-left:2.2px;white-space:nowrap">13%</div>
<div class="abs cl" style="left:325px;top:224.3px;width:18.5px;text-align:right;height:14px;line-height:14px;font-size:10px;color:#d8d8d8;white-space:nowrap">K:</div>
<div class="abs df" style="left:346.5px;top:224.3px;width:46.5px;height:14.5px;background:#454545;border:1px solid #404040;border-radius:2px;font-size:10px;line-height:12.5px;color:#fff;padding-left:2.2px;white-space:nowrap">0%</div>
<div class="abs" style="left:249px;top:224.3px;height:14px;line-height:14px;font-size:9.7px;color:#d8d8d8">#</div>
<div class="abs" id="hex" style="letter-spacing:.4px;left:257px;top:223.8px;width:67px;height:15px;background:#fff;border:1px solid #6aa5e8;box-shadow:0 0 0 1px #8fc0f5;border-radius:2px;font-size:10px;line-height:13px;color:#3a4a66;padding-left:3px;white-space:nowrap"><span style="background:#b5d5fb;display:inline-block;height:12px;line-height:12px;margin-top:.5px">618ab7</span></div>
<div class="abs" style="left:12.3px;top:247.5px;width:9px;height:9px;border:1px solid #cfcfcf;border-radius:1.5px;background:#535353"></div>
<div class="abs" id="web" style="left:25px;top:245px;height:14px;line-height:14px;font-size:9.8px;color:#f4f4f4;font-weight:500;white-space:nowrap">仅限 <span style="font-weight:bold;font-size:10px">Web</span> 颜色</div>
</div>
<svg class="abs" style="left:745px;top:512px;opacity:.6;filter:blur(.5px)" width="115" height="42" viewBox="0 0 115 42"><g fill="none" stroke="#3f78b8"><circle cx="14.8" cy="15.4" r="10" stroke-width="3"/><path d="M11.3,11 V16.5 A3.5,3.5 0 0 0 18.3,16.5 V11" stroke-width="2"/><path d="M9.5,28.3 H20 M10.8,31.5 H18.8 M12.6,34.6 H17" stroke-width="2"/></g><text x="35" y="24.2" style="font-family:'Liberation Sans',sans-serif" font-weight="bold" font-size="23.5" fill="#3f78b8" textLength="73" lengthAdjust="spacingAndGlyphs">UIIIUIII</text><text x="37" y="31.2" style="font-family:'Liberation Sans','Noto Sans CJK SC',sans-serif" font-weight="bold" font-size="4.8" fill="#3f78b8" textLength="69" lengthAdjust="spacing">优优教程网自学就上</text></svg>
<!--/DIALOG-->
</div></body></html>
